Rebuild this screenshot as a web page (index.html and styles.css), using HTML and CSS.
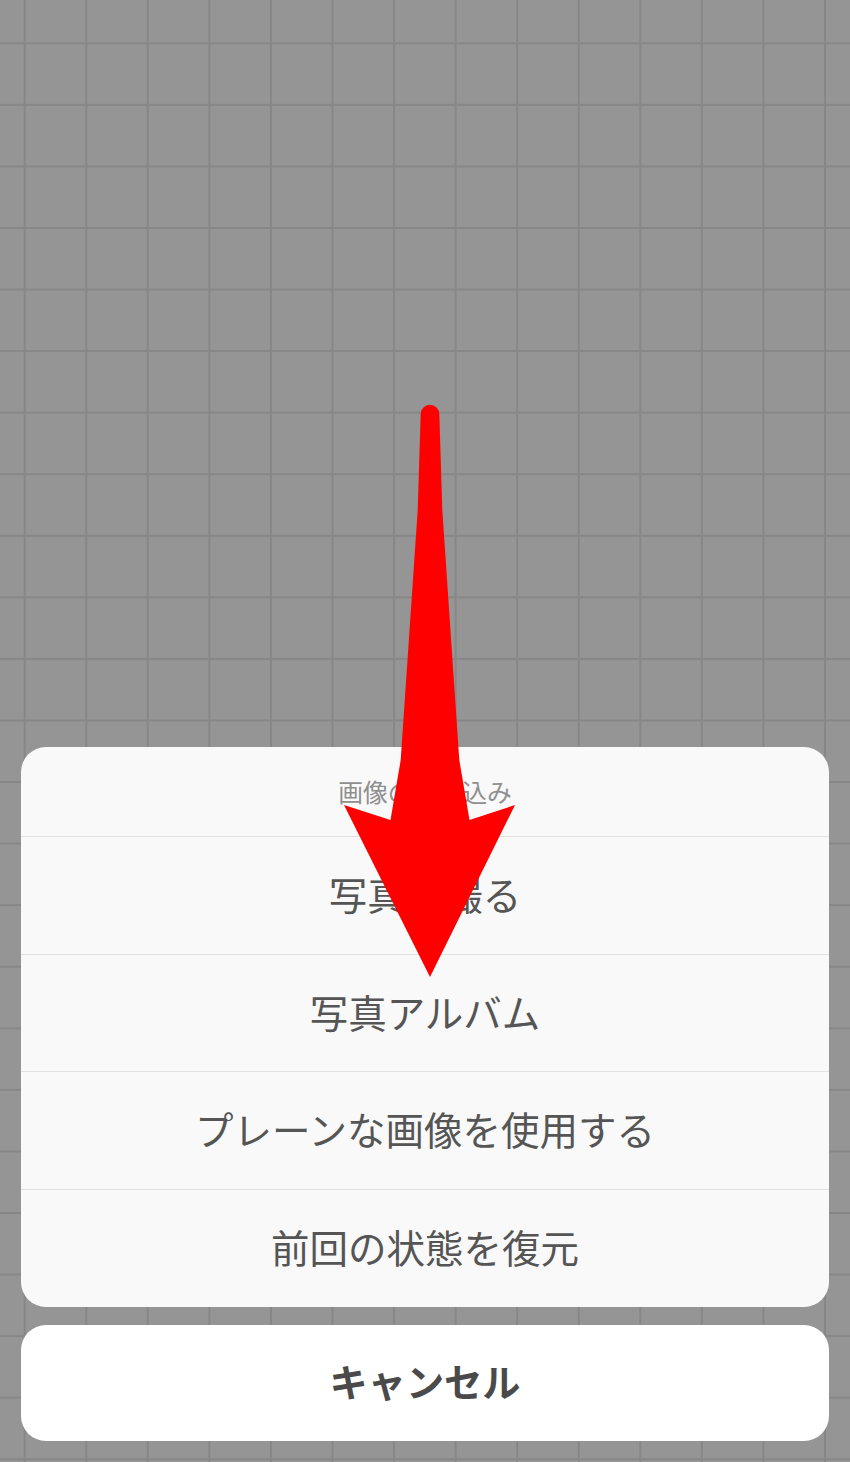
FILE: index.html
```html
<!DOCTYPE html>
<html lang="ja">
<head>
<meta charset="utf-8">
<title>画像の読み込み</title>
<link rel="stylesheet" href="styles.css">
</head>
<body>
<div class="screen">
  <div class="sheet">
    <div class="group">
      <div class="title">画像の読み込み</div>
      <div class="action">写真を撮る</div>
      <div class="action">写真アルバム</div>
      <div class="action">プレーンな画像を使用する</div>
      <div class="action">前回の状態を復元</div>
    </div>
    <div class="cancel">キャンセル</div>
  </div>
  <svg class="arrow" width="850" height="1462" viewBox="0 0 850 1462">
    <path d="M420.7 414 A9.3 9.3 0 0 1 439.3 414 L442.3 510 L445.7 560 L452.5 660 L459.3 760 L469.5 820 L515 805 L430 977 L344 805 L390.5 820 L400.7 760 L407.5 660 L414.3 560 L417.7 510 Z" fill="#ff0000"/>
  </svg>
</div>
</body>
</html>
```
FILE: styles.css
```css
html, body {
  margin: 0;
  padding: 0;
}

body {
  font-family: "Noto Sans CJK JP", "Noto Sans", sans-serif;
}

.screen {
  position: relative;
  width: 850px;
  height: 1462px;
  overflow: hidden;
  box-sizing: border-box;
  background-color: #959595;
  background-image:
    linear-gradient(to right, #878787 0, #878787 2px, transparent 2px),
    linear-gradient(to bottom, #878787 0, #878787 2px, transparent 2px);
  background-size: 61.57px 61.57px;
  background-position: 23.7px 42.3px;
  display: flex;
  flex-direction: column;
  justify-content: flex-end;
  padding: 0 21px 21px;
}

.sheet {
  display: flex;
  flex-direction: column;
  gap: 18px;
}

.group {
  background: #f9f9f9;
  border-radius: 25px;
  overflow: hidden;
  display: flex;
  flex-direction: column;
}

.title {
  height: 90px;
  display: flex;
  align-items: center;
  justify-content: center;
  font-size: 24.8px;
  color: #8f8f8f;
  border-bottom: 1px solid #e2e2e2;
  box-sizing: border-box;
  padding-bottom: 2px;
}

.action {
  height: 117.5px;
  display: flex;
  align-items: center;
  justify-content: center;
  font-size: 38.5px;
  color: #555555;
  border-bottom: 1px solid #e2e2e2;
  box-sizing: border-box;
  padding-bottom: 4px;
}

.action:last-child {
  border-bottom: none;
}

.cancel {
  height: 116px;
  background: #ffffff;
  border-radius: 25px;
  display: flex;
  align-items: center;
  justify-content: center;
  font-size: 38.2px;
  font-weight: 700;
  color: #4a4a4a;
  box-sizing: border-box;
  padding-bottom: 5px;
}

.arrow {
  position: absolute;
  left: 0;
  top: 0;
}
```
